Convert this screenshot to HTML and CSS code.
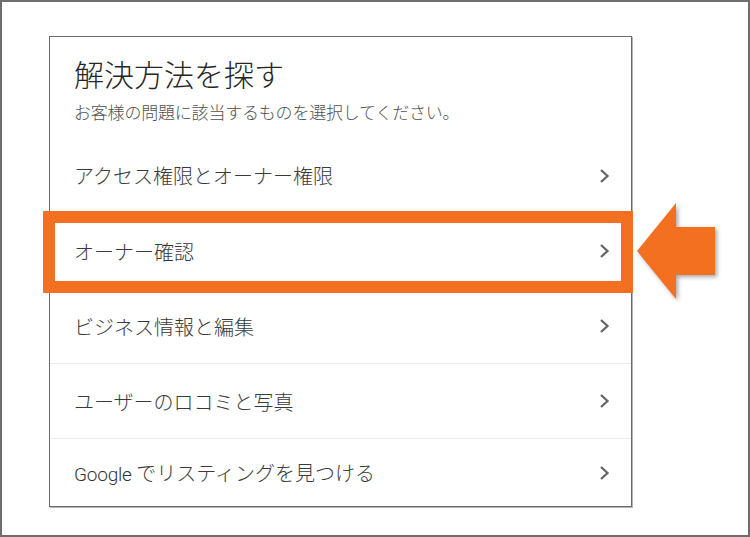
FILE: index.html
```html
<!DOCTYPE html>
<html lang="ja">
<head>
<meta charset="utf-8">
<link rel="stylesheet" href="styles.css">
</head>
<body>
<div class="frame">
  <div class="card">
    <div class="header">
      <h1 class="title">解決方法を探す</h1>
      <p class="subtitle">お客様の問題に該当するものを選択してください。</p>
    </div>
    <ul class="list">
      <li class="row"><span class="label">アクセス権限とオーナー権限</span><svg class="chev" viewBox="0 0 11 16"><polyline points="2,2 8.5,8 2,14"/></svg></li>
      <li class="row"><span class="label">オーナー確認</span><svg class="chev" viewBox="0 0 11 16"><polyline points="2,2 8.5,8 2,14"/></svg></li>
      <li class="row"><span class="label">ビジネス情報と編集</span><svg class="chev" viewBox="0 0 11 16"><polyline points="2,2 8.5,8 2,14"/></svg></li>
      <li class="row"><span class="label">ユーザーのロコミと写真</span><svg class="chev" viewBox="0 0 11 16"><polyline points="2,2 8.5,8 2,14"/></svg></li>
      <li class="row last"><span class="label"><span class="latin">Google</span> でリスティングを見つける</span><svg class="chev" viewBox="0 0 11 16"><polyline points="2,2 8.5,8 2,14"/></svg></li>
    </ul>
  </div>
  <div class="highlight"></div>
  <svg class="arrow" viewBox="0 0 90 110"><polygon points="4,51 43,3 43,27 82,27 82,75 43,75 43,99"/></svg>
</div>
</body>
</html>
```
FILE: styles.css
```css
* { box-sizing: border-box; }
html, body { margin: 0; padding: 0; background: #fff; }
body { font-family: "Noto Sans CJK JP", "Noto Sans", sans-serif; }
.frame {
  position: relative;
  width: 750px;
  height: 537px;
  border: 2px solid #6e6e6e;
  padding: 34px 0 0 47px;
}
.card {
  width: 583px;
  height: 471px;
  border: 1px solid #6a6a6a;
  box-shadow: 1px 1px 0 #b5b5b5;
  background: #fff;
  display: flex;
  flex-direction: column;
}
.header {
  padding: 18px 24px 14px 24px;
  height: 101px;
}
.title {
  margin: 0;
  font-size: 30px;
  line-height: 37px;
  font-weight: 300;
  color: #262626;
}
.subtitle {
  margin: 9px 0 0 0;
  font-size: 17px;
  line-height: 22px;
  font-weight: 300;
  color: #505050;
  letter-spacing: -0.2px;
}
.list { list-style: none; margin: 0; padding: 0; }
.row {
  height: 75px;
  border-top: 1px solid #ececec;
  display: flex;
  align-items: center;
  justify-content: space-between;
  padding: 0 21px 0 24px;
  font-size: 20px;
  font-weight: 300;
  color: #3a3a3a;
}
.row:first-child { border-top: none; }
.row.last { height: 68px; }
.latin { font-family: Roboto, "Noto Sans", sans-serif; font-size: 19px; font-weight: 300; color: #333; letter-spacing: -0.2px; }
.chev { width: 11px; height: 16px; fill: none; stroke: #666; stroke-width: 2.3; }
.highlight {
  position: absolute;
  left: 41px;
  top: 209px;
  width: 590px;
  height: 82px;
  border: 12px solid #f37021;
}
.arrow {
  position: absolute;
  left: 631px;
  top: 198px;
  width: 90px;
  height: 110px;
  fill: #f37021;
  filter: drop-shadow(2px 2px 2px rgba(0,0,0,0.35));
}
```
